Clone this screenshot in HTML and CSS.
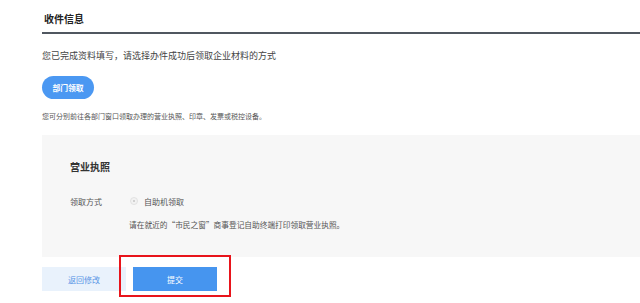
FILE: index.html
```html
<!DOCTYPE html>
<html lang="zh">
<head>
<meta charset="utf-8">
<link rel="stylesheet" href="styles.css">
</head>
<body>
<div class="page">
  <h2 class="title">收件信息</h2>
  <p class="intro">您已完成资料填写，请选择办件成功后领取企业材料的方式</p>
  <button class="pill">部门领取</button>
  <p class="note">您可分别前往各部门窗口领取办理的营业执照、印章、发票或税控设备。</p>
  <div class="panel">
    <h3 class="panel-title">营业执照</h3>
    <div class="row">
      <span class="label">领取方式</span>
      <span class="radio"><span class="dot"></span></span>
      <span class="option">自助机领取</span>
    </div>
    <p class="desc">请在就近的“市民之窗”商事登记自助终端打印领取营业执照。</p>
  </div>
  <div class="actions">
    <button class="btn back">返回修改</button>
    <div class="submit-wrap">
      <button class="btn submit">提交</button>
      <span class="highlight"></span>
    </div>
  </div>
</div>
</body>
</html>
```
FILE: styles.css
```css
* { box-sizing: border-box; }
html, body { margin: 0; padding: 0; background: #fff; }
body {
  font-family: "Noto Sans CJK SC", "Noto Sans", sans-serif;
  color: #444;
  width: 640px;
  height: 303px;
  overflow: hidden;
}
.page { padding-left: 42px; }
.title {
  margin: 0;
  padding: 12px 0 6px 2px;
  font-size: 10px;
  line-height: 14px;
  font-weight: 700;
  color: #222;
  border-bottom: 2px solid #505760;
}
.intro {
  margin: 15px 0 0;
  font-size: 9px;
  line-height: 14px;
  color: #444;
}
.pill {
  display: block;
  margin-top: 13px;
  width: 52px;
  height: 23px;
  border: none;
  border-radius: 12px;
  background: #4b98f2;
  color: #fff;
  font-family: inherit;
  font-size: 7.8px;
  font-weight: 700;
  padding: 0;
}
.note {
  margin: 12px 0 0;
  font-size: 7px;
  line-height: 10px;
  color: #555;
}
.panel {
  margin-top: 14px;
  background: #f7f7f7;
  padding: 25px 0 26px 28px;
}
.panel-title {
  margin: 0;
  font-size: 10px;
  line-height: 14px;
  font-weight: 700;
  color: #333;
}
.row {
  margin-top: 21px;
  display: flex;
  align-items: center;
  height: 12px;
  font-size: 8px;
  color: #555;
}
.label { width: 60px; }
.radio {
  width: 8px;
  height: 8px;
  border-radius: 50%;
  border: 1px solid #e2e2e2;
  background: #f2f2f2;
  display: flex;
  align-items: center;
  justify-content: center;
}
.dot {
  width: 2px;
  height: 2px;
  border-radius: 50%;
  background: #c4c4c4;
}
.option { margin-left: 6px; }
.desc {
  margin: 12px 0 0 59px;
  font-size: 7.7px;
  line-height: 12px;
  color: #555;
}
.actions {
  margin-top: 10px;
  display: flex;
  gap: 7px;
}
.btn {
  width: 84px;
  height: 24px;
  border: none;
  padding: 0;
  font-family: inherit;
  font-size: 8px;
}
.back { background: #e9f2fc; color: #5a96e6; }
.submit { background: #4695ef; color: #fff; display: block; }
.submit-wrap { position: relative; }
.highlight {
  position: absolute;
  left: -14px;
  top: -12px;
  width: 112px;
  height: 42px;
  border: 2px solid #e8141b;
  pointer-events: none;
}
```
